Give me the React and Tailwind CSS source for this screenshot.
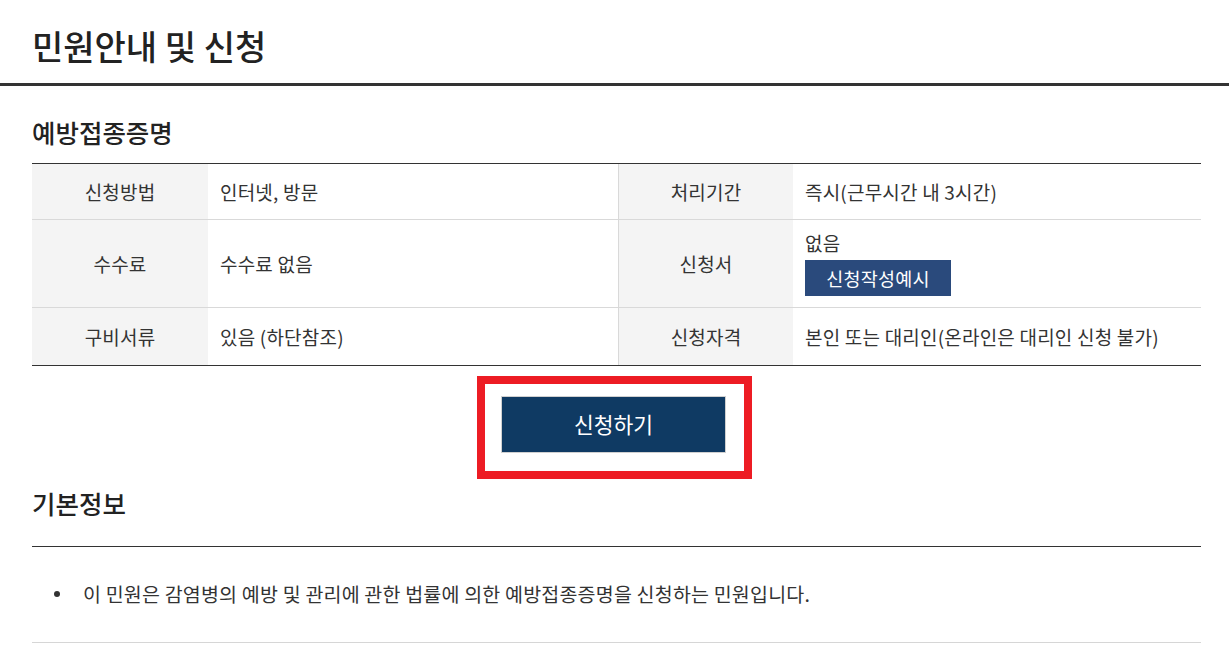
import React from "react";

const rows = [
  { th1: "신청방법", td1: "인터넷, 방문", th2: "처리기간", td2: "즉시(근무시간 내 3시간)", h: "h-[56px]" },
  { th1: "수수료", td1: "수수료 없음", th2: "신청서", td2: null, h: "h-[88px]" },
  { th1: "구비서류", td1: "있음 (하단참조)", th2: "신청자격", td2: "본인 또는 대리인(온라인은 대리인 신청 불가)", h: "h-[58px]" },
];

const App = () => {
  return (
    <div
      className="w-[1229px] min-h-[652px] bg-white text-[#333] overflow-hidden"
      style={{ fontFamily: "'Noto Sans CJK KR', 'Noto Sans', sans-serif" }}
    >
      {/* Title */}
      <div className="pl-8 border-b-[3px] border-[#333]">
        <h1 className="pt-[26px] pb-[17px] text-[34px] leading-[40px] font-medium text-[#222]">
          민원안내 및 신청
        </h1>
      </div>

      <div className="pl-8 pr-7">
        {/* Sub heading */}
        <h2 className="mt-[30px] mb-[15px] text-[25.5px] leading-[32px] font-medium text-[#222]">
          예방접종증명
        </h2>

        {/* Info table */}
        <div className="border-t border-[#333] text-[19px] leading-[24px] tracking-[0.2px]">
          {rows.map((r, i) => (
            <div
              key={r.th1}
              className={`flex border-b ${i === rows.length - 1 ? "border-[#333]" : "border-[#d9d9d9]"} ${r.h}`}
            >
              <div className="w-[176px] shrink-0 bg-[#f4f4f4] flex items-center justify-center">
                {r.th1}
              </div>
              <div className="w-[410px] shrink-0 flex items-center pl-3">{r.td1}</div>
              <div className="w-[175px] shrink-0 bg-[#f4f4f4] border-l border-[#d9d9d9] flex items-center justify-center">
                {r.th2}
              </div>
              <div className="flex-1 flex flex-col justify-center pl-3">
                {r.td2 ? (
                  r.td2
                ) : (
                  <>
                    <span>없음</span>
                    <button className="mt-[5px] w-[146px] h-[36px] bg-[#2a4a7c] text-white text-[18.5px] flex items-center justify-center">
                      신청작성예시
                    </button>
                  </>
                )}
              </div>
            </div>
          ))}
        </div>

        {/* Apply button */}
        <div className="flex justify-center mt-[30px]">
          <div className="relative mr-[6px]">
            <button className="w-[225px] h-[57px] bg-[#0f3a63] border border-[#d0d0d0] text-white text-[21.5px]">
              신청하기
            </button>
            <span className="absolute -left-[24px] -top-[20px] -right-[26px] -bottom-[26px] border-[8px] border-[#ed1c24] pointer-events-none"></span>
          </div>
        </div>

        {/* Basic info */}
        <h2 className="mt-[34px] mb-[27px] text-[25.5px] leading-[32px] font-medium text-[#222]">
          기본정보
        </h2>
        <div className="border-t border-[#333]">
          <div className="flex items-center pt-[33px] pb-[34px] border-b border-[#d6d6d6] text-[19.5px] leading-[28px] tracking-[0.2px]">
            <span className="ml-[22px] w-[6px] h-[6px] rounded-full bg-[#333] shrink-0"></span>
            <span className="ml-[23px]">
              이 민원은 감염병의 예방 및 관리에 관한 법률에 의한 예방접종증명을 신청하는 민원입니다.
            </span>
          </div>
        </div>
      </div>
    </div>
  );
};

export default App;
